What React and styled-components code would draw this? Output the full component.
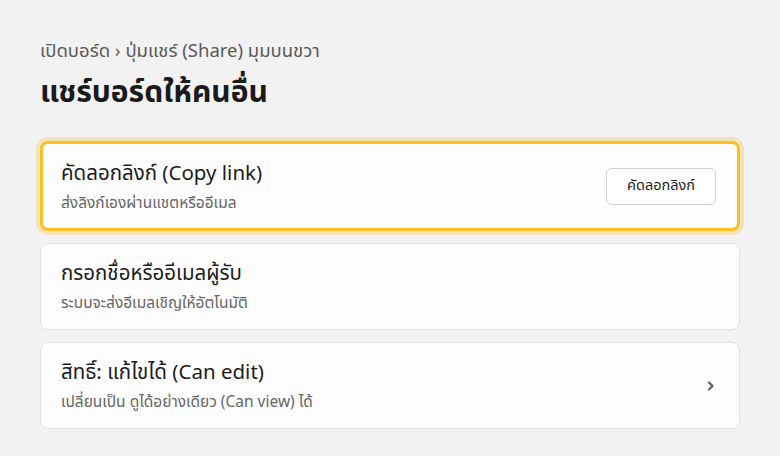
import styled, { createGlobalStyle } from 'styled-components';

const Global = createGlobalStyle`
  html, body {
    margin: 0;
    background: #f2f2f2;
  }
  body {
    font-family: "Noto Sans Thai", "Noto Sans Thai Looped", "Noto Sans", "DejaVu Sans", sans-serif;
    color: #1c1c1c;
  }
`;

const Page = styled.div`
  padding: 37px 40px 0 40px;
  display: flex;
  flex-direction: column;
`;

const Breadcrumb = styled.div`
  font-size: 18.5px;
  color: #5a5a5a;
  line-height: 28px;
`;

const Title = styled.h1`
  margin: 8px 0 28px 0;
  font-size: 30px;
  font-weight: 700;
  line-height: 40px;
  color: #1a1a1a;
`;

const List = styled.div`
  display: flex;
  flex-direction: column;
  gap: 12px;
`;

const Card = styled.div`
  box-sizing: border-box;
  height: ${p => (p.$active ? 90 : 87)}px;
  display: flex;
  align-items: center;
  justify-content: space-between;
  padding: 0 ${p => (p.$active ? 21 : 22)}px 0 ${p => (p.$active ? 18 : 20)}px;
  background: #fdfdfd;
  border: ${p => (p.$active ? '3px solid #fbbf24' : '1px solid #e2e2e2')};
  border-radius: 8px;
  box-shadow: ${p => (p.$active ? '0 0 0 4px rgba(251, 191, 36, 0.28)' : 'none')};
`;

const Text = styled.div`
  display: flex;
  flex-direction: column;
  gap: 5px;
  padding-top: 2px;
`;

const CardTitle = styled.div`
  font-size: 20.5px;
  line-height: 28px;
  color: #1c1c1c;
`;

const CardSub = styled.div`
  font-size: 15.5px;
  line-height: 22px;
  color: #666;
`;

const Button = styled.button`
  box-sizing: border-box;
  width: 110px;
  height: 37px;
  border: 1px solid #cfcfcf;
  border-radius: 6px;
  background: #fff;
  font-family: inherit;
  font-size: 14.5px;
  color: #1c1c1c;
`;

const Chevron = styled.svg`
  width: 12px;
  height: 12px;
`;

export default function App() {
  return (
    <>
      <Global />
      <Page>
        <Breadcrumb>เปิดบอร์ด › ปุ่มแชร์ (Share) มุมบนขวา</Breadcrumb>
        <Title>แชร์บอร์ดให้คนอื่น</Title>
        <List>
          <Card $active>
            <Text>
              <CardTitle>คัดลอกลิงก์ (Copy link)</CardTitle>
              <CardSub>ส่งลิงก์เองผ่านแชตหรืออีเมล</CardSub>
            </Text>
            <Button>คัดลอกลิงก์</Button>
          </Card>
          <Card>
            <Text>
              <CardTitle>กรอกชื่อหรืออีเมลผู้รับ</CardTitle>
              <CardSub>ระบบจะส่งอีเมลเชิญให้อัตโนมัติ</CardSub>
            </Text>
          </Card>
          <Card>
            <Text>
              <CardTitle>สิทธิ์: แก้ไขได้ (Can edit)</CardTitle>
              <CardSub>เปลี่ยนเป็น ดูได้อย่างเดียว (Can view) ได้</CardSub>
            </Text>
            <Chevron viewBox="0 0 12 12">
              <path d="M4 2.5 L7.5 6 L4 9.5" fill="none" stroke="#666" strokeWidth="2.4" strokeLinecap="round" strokeLinejoin="round" />
            </Chevron>
          </Card>
        </List>
      </Page>
    </>
  );
}
